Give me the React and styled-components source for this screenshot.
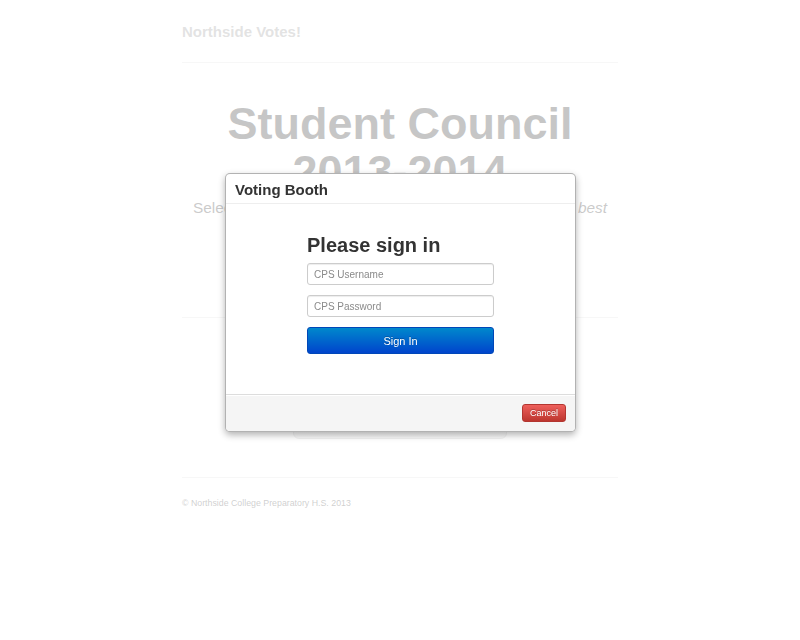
import React from "react";
import styled, { createGlobalStyle } from "styled-components";

const GlobalStyle = createGlobalStyle`
  html, body {
    margin: 0;
    padding: 0;
    background: #ffffff;
    font-family: "Liberation Sans", Arial, Helvetica, sans-serif;
    color: #333333;
  }
`;

const Container = styled.div`
  width: 436px;
  margin: 0 auto;
`;

const Masthead = styled.h3`
  margin: 0;
  padding-top: 22px;
  font-size: 15px;
  line-height: 20px;
  font-weight: 700;
  color: #999999;
`;

const Rule = styled.hr`
  margin: ${(p) => p.$top || 20}px 0 0;
  border: 0;
  border-top: 1px solid #e2e2e2;
  border-bottom: 1px solid #ffffff;
`;

const Jumbotron = styled.div`
  padding-top: 36px;
  text-align: center;
`;

const Title = styled.h1`
  margin: 0;
  font-size: 45px;
  line-height: 48px;
  font-weight: 700;
  color: #333333;
`;

const Lead = styled.p`
  margin: 2px 0 0;
  font-size: 15.4px;
  line-height: 20px;
  color: #444444;

  em {
    font-style: italic;
  }
`;

const Ballot = styled.div`
  display: flex;
  justify-content: center;
  padding-top: 76px;
`;

const BigButton = styled.div`
  width: 214px;
  height: 44px;
  border-radius: 6px;
  background: linear-gradient(#ffffff, #e6e6e6);
  border: 1px solid #cccccc;
  box-sizing: border-box;
`;

const Footer = styled.p`
  margin: 18px 0 0;
  font-size: 8.8px;
  line-height: 12px;
  color: #555555;
`;

const Backdrop = styled.div`
  position: fixed;
  inset: 0;
  background: rgba(255, 255, 255, 0.72);
`;

const Modal = styled.div`
  position: fixed;
  top: 173px;
  left: 50%;
  width: 351px;
  margin-left: -175px;
  box-sizing: border-box;
  background: #ffffff;
  border: 1px solid rgba(0, 0, 0, 0.3);
  border-radius: 5px;
  box-shadow: 0 3px 7px rgba(0, 0, 0, 0.3);
  overflow: hidden;
`;

const ModalHeader = styled.div`
  padding: 6px 9px 4px;
  border-bottom: 1px solid #eeeeee;

  h3 {
    margin: 0;
    font-size: 15px;
    line-height: 19px;
    font-weight: 700;
    color: #333333;
  }
`;

const ModalBody = styled.div`
  padding: 29px 0 40px;
  display: flex;
  justify-content: center;
`;

const SignInForm = styled.form`
  width: 187px;
  display: flex;
  flex-direction: column;
  gap: 10px;
  margin: 0;
`;

const FormHeading = styled.h2`
  margin: 0 0 -4px;
  font-size: 20px;
  line-height: 24px;
  font-weight: 700;
  color: #333333;
`;

const Field = styled.input`
  height: 22px;
  box-sizing: border-box;
  padding: 0 6px;
  border: 1px solid #cccccc;
  border-radius: 3px;
  box-shadow: inset 0 1px 1px rgba(0, 0, 0, 0.075);
  font-family: "Liberation Sans", Arial, sans-serif;
  font-size: 10px;
  color: #555555;
  outline: none;

  &::placeholder {
    color: #8a8a8a;
  }
`;

const Button = styled.button`
  box-sizing: border-box;
  border-radius: 3px;
  color: #ffffff;
  font-family: "Liberation Sans", Arial, sans-serif;
  text-shadow: 0 -1px 0 rgba(0, 0, 0, 0.25);
  cursor: pointer;
  border: 1px solid
    ${(p) => (p.$variant === "danger" ? "#b33630" : "#0047b8")};
  background: ${(p) =>
    p.$variant === "danger"
      ? "linear-gradient(#ee5f5b, #bd362f)"
      : "linear-gradient(#0088cc, #0044cc)"};
  height: ${(p) => (p.$small ? 18 : 27)}px;
  width: ${(p) => (p.$small ? "44px" : "100%")};
  font-size: ${(p) => (p.$small ? 9 : 11)}px;
  padding: 0;
`;

const ModalFooter = styled.div`
  display: flex;
  justify-content: flex-end;
  padding: 9px;
  background: #f5f5f5;
  border-top: 1px solid #dddddd;
  box-shadow: inset 0 1px 0 #ffffff;
`;

export default function App() {
  return (
    <>
      <GlobalStyle />
      <Container>
        <Masthead>Northside Votes!</Masthead>
        <Rule />
        <Jumbotron>
          <Title>
            Student Council
            <br />
            2013-2014
          </Title>
          <Lead>
            Select the candidates that you think will serve Northside{" "}
            <em>best</em>
            <br />
            and cast your ballot below.
          </Lead>
        </Jumbotron>
        <Rule $top={79} />
        <Ballot>
          <BigButton />
        </Ballot>
        <Rule $top={38} />
        <Footer>© Northside College Preparatory H.S. 2013</Footer>
      </Container>

      <Backdrop />
      <Modal>
        <ModalHeader>
          <h3>Voting Booth</h3>
        </ModalHeader>
        <ModalBody>
          <SignInForm onSubmit={(e) => e.preventDefault()}>
            <FormHeading>Please sign in</FormHeading>
            <Field type="text" placeholder="CPS Username" />
            <Field type="password" placeholder="CPS Password" />
            <Button type="submit">Sign In</Button>
          </SignInForm>
        </ModalBody>
        <ModalFooter>
          <Button type="button" $variant="danger" $small>
            Cancel
          </Button>
        </ModalFooter>
      </Modal>
    </>
  );
}
